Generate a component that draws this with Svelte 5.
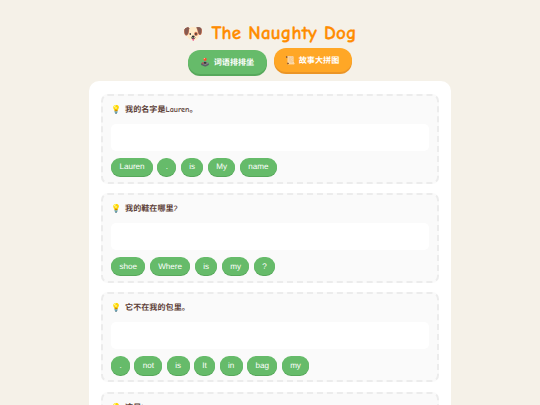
<script>
  const exercises = [
    { hint: '我的名字是Lauren。', words: ['Lauren', '.', 'is', 'My', 'name'] },
    { hint: '我的鞋在哪里?', words: ['shoe', 'Where', 'is', 'my', '?'] },
    { hint: '它不在我的包里。', words: ['.', 'not', 'is', 'It', 'in', 'bag', 'my'] },
    { hint: '这是Lauren。', words: ['Lauren', 'is', 'This', '.'] }
  ];
</script>

<div class="page">
  <h1><span class="dog">🐶</span>The Naughty Dog</h1>
  <nav class="tabs">
    <button class="tab green">🕹️ 词语排排坐</button>
    <button class="tab orange">📜 故事大拼图</button>
  </nav>
  <main class="card">
    {#each exercises as ex}
      <section class="exercise">
        <p class="hint"><span class="bulb">💡</span>{ex.hint}</p>
        <div class="answer"></div>
        <div class="words">
          {#each ex.words as w}
            <button class="word">{w}</button>
          {/each}
        </div>
      </section>
    {/each}
  </main>
</div>

<style>
  :global(body) {
    margin: 0;
    background: #f5f1e8;
    font-family: "Comic Neue", "Noto Sans CJK SC", sans-serif;
    text-rendering: geometricPrecision;
    overflow: hidden;
  }
  .page {
    display: flex;
    flex-direction: column;
    align-items: center;
    height: 405px;
    overflow: hidden;
    padding-top: 20px;
    box-sizing: border-box;
  }
  h1 {
    margin: 0 0 1px;
    color: #ff8c00;
    font-size: 19px;
    line-height: 26px;
    font-weight: 700;
    letter-spacing: 0.2px;
    white-space: nowrap;
    -webkit-text-stroke: 0.3px #ff8c00;
  }
  .dog { margin-right: 8px; font-size: 16px; }
  .tabs {
    display: flex;
    gap: 7px;
    align-items: flex-start;
    margin-bottom: 7px;
  }
  .tab {
    border: none;
    border-radius: 13px;
    color: #fff;
    font: inherit;
    font-size: 8.1px;
    font-weight: 700;
    height: 24px;
    padding: 0 12.3px;
    text-rendering: inherit;
  }
  .green {
    background: #66bb6a;
    box-shadow: 0 2px 0 #57a85b;
    margin-top: 2px;
  }
  .orange {
    background: #ffa726;
    box-shadow: 0 2px 0 #eb9526;
  }
  .card {
    width: 338px;
    background: #fff;
    border-radius: 10px;
    padding: 12.5px 12px;
    display: flex;
    flex-direction: column;
    gap: 9.4px;
    flex-shrink: 0;
  }
  .exercise {
    box-sizing: border-box;
    background: #fafafa;
    border: 2px dashed #ececec;
    border-radius: 7px;
    padding: 9px 8px 8px;
    height: 90px;
  }
  .hint {
    margin: 0 0 7px;
    color: #5d4037;
    font-size: 8.1px;
    line-height: 12px;
    font-weight: 700;
  }
  .bulb { margin-right: 4px; }
  .answer {
    background: #fff;
    border-radius: 5px;
    height: 27px;
    margin-bottom: 7px;
  }
  .words { display: flex; gap: 4.4px; }
  .word {
    background: #66bb6a;
    border: none;
    border-radius: 9px;
    box-shadow: 0 1px 0 #57a85b;
    color: #fff;
    font-family: "Liberation Sans", sans-serif;
    font-size: 8.1px;
    height: 18.5px;
    padding: 0 8.4px;
    text-rendering: geometricPrecision;
  }
</style>
